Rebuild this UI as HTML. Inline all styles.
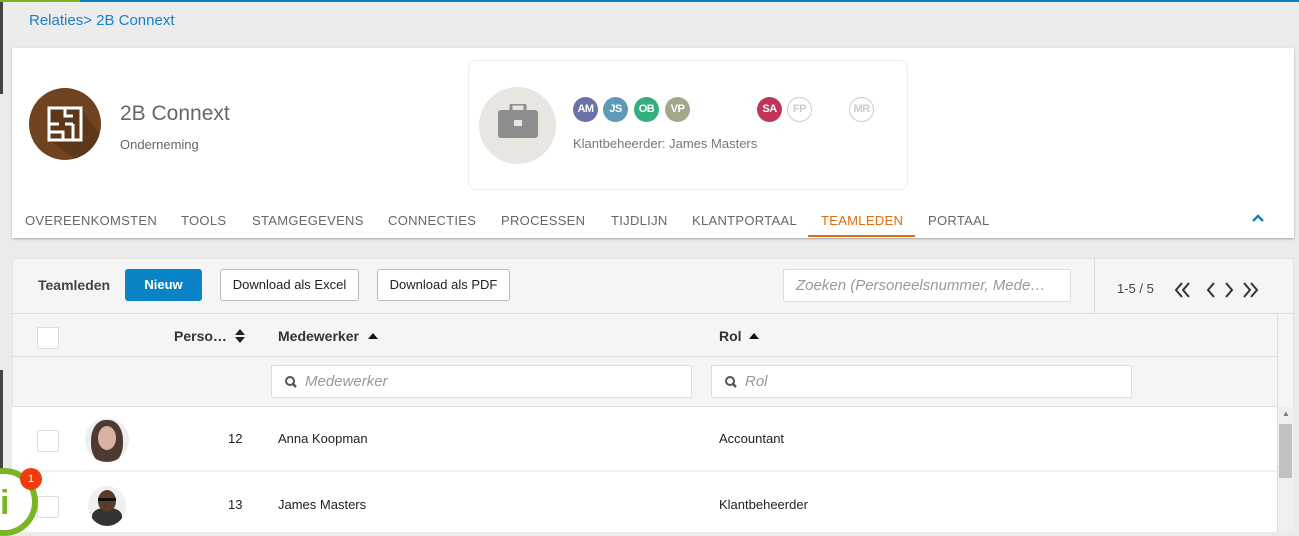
<!DOCTYPE html>
<html><head><meta charset="utf-8"><style>
*{box-sizing:border-box;margin:0;padding:0}
body{width:1299px;height:532px;overflow:hidden;background:#ebebeb;font-family:"Liberation Sans",Arial,sans-serif;position:relative;color:#333}
.abs{position:absolute}
.tab{position:absolute;top:213px;font-size:13px;color:#666;letter-spacing:0.3px}
.av{position:absolute;top:97px;width:25px;height:25px;border-radius:50%;color:#fff;font-size:11px;font-weight:bold;text-align:center;line-height:25px;letter-spacing:-0.5px}
.btn{position:absolute;top:269px;height:32px;border:1px solid #bbb;border-radius:3px;background:#fff;font-size:13px;line-height:30px;text-align:center;color:#222}
.cb{position:absolute;width:22px;height:22px;border:1px solid #ddd;border-radius:2px;background:#fff}
.inp{position:absolute;top:365px;height:33px;border:1px solid #ddd;border-radius:2px;background:#fff;font-size:15px;font-style:italic;color:#999;line-height:31px;padding-left:33px}
.th{position:absolute;top:328px;font-size:14px;font-weight:bold;color:#333}
.td{position:absolute;font-size:13px;color:#222}
</style></head><body>
<div class="abs" style="left:0;top:0;width:80px;height:2px;background:#7ab526"></div>
<div class="abs" style="left:80px;top:0;width:1219px;height:2px;background:#0a7fc5"></div>
<div class="abs" style="left:3px;top:2px;width:1296px;height:38px;background:#ececec"></div>
<div class="abs" style="left:0;top:2px;width:3px;height:92px;background:#444"></div>
<div class="abs" style="left:0;top:370px;width:3px;height:162px;background:#444"></div>
<div class="abs" style="left:29px;top:12px;font-size:15px;color:#1a7fc4">Relaties&gt; 2B Connext</div>

<div class="abs" style="left:12px;top:48px;width:1282px;height:190px;background:#fff;box-shadow:0 1px 2px rgba(0,0,0,.3)"></div>
<div class="abs" style="left:29px;top:88px;width:72px;height:72px;border-radius:50%;background:#6f4320;overflow:hidden">
<svg width="72" height="72"><polygon points="20,20 52,20 80,60 60,80 20,52" fill="#5e3719"/><rect x="20" y="20" width="32" height="32" fill="none" stroke="#fff" stroke-width="3"/><path d="M20 36h10M36 20v8h8M44 36v16M20 44h14v8M36 36h8" stroke="#fff" stroke-width="3" fill="none"/></svg></div>
<div class="abs" style="left:120px;top:102px;font-size:21px;color:#666">2B Connext</div>
<div class="abs" style="left:120px;top:137px;font-size:13px;color:#666">Onderneming</div>

<div class="abs" style="left:468px;top:60px;width:440px;height:130px;border:1px solid #eee;border-radius:8px;background:#fff"></div>
<div class="abs" style="left:479px;top:87px;width:77px;height:77px;border-radius:50%;background:#e9e6e2"></div>
<svg class="abs" style="left:497px;top:104px" width="42" height="36"><rect x="14" y="0" width="14" height="9" rx="2" fill="none" stroke="#8d8d8d" stroke-width="3"/><rect x="1" y="6" width="40" height="28" rx="3" fill="#8d8d8d"/><rect x="17" y="16" width="8" height="6" fill="#e9e6e2"/></svg>
<div class="av" style="left:573px;background:#6b72a8">AM</div>
<div class="av" style="left:603px;background:#5e9ab5">JS</div>
<div class="av" style="left:634px;background:#35ad7c">OB</div>
<div class="av" style="left:665px;background:#a3a88a">VP</div>
<div class="av" style="left:757px;background:#c0345a">SA</div>
<div class="av" style="left:787px;border:1px solid #ccc;color:#ccc;line-height:23px">FP</div>
<div class="av" style="left:849px;border:1px solid #ccc;color:#ccc;line-height:23px">MR</div>
<div class="abs" style="left:573px;top:136px;font-size:13px;color:#777">Klantbeheerder: James Masters</div>

<div class="tab" style="left:25px">OVEREENKOMSTEN</div>
<div class="tab" style="left:181px">TOOLS</div>
<div class="tab" style="left:252px">STAMGEGEVENS</div>
<div class="tab" style="left:388px">CONNECTIES</div>
<div class="tab" style="left:501px">PROCESSEN</div>
<div class="tab" style="left:611px">TIJDLIJN</div>
<div class="tab" style="left:692px">KLANTPORTAAL</div>
<div class="tab" style="left:821px;color:#e06a10">TEAMLEDEN</div>
<div class="abs" style="left:808px;top:235px;width:107px;height:2px;background:#e06a10"></div>
<div class="tab" style="left:928px">PORTAAL</div>
<svg class="abs" style="left:1251px;top:213px" width="14" height="10"><path d="M2 8L7 3L12 8" stroke="#1a7fc4" stroke-width="2.5" fill="none"/></svg>

<div class="abs" style="left:12px;top:258px;width:1282px;height:274px;background:#f5f5f5;border:1px solid #e3e3e3"></div>
<div class="abs" style="left:1094px;top:258px;width:1px;height:56px;background:#ddd"></div>
<div class="abs" style="left:12px;top:313px;width:1282px;height:1px;background:#ddd"></div>
<div class="abs" style="left:38px;top:277px;font-size:14px;font-weight:bold;color:#444">Teamleden</div>
<div class="btn" style="left:125px;width:77px;background:#0a82c6;border-color:#0a82c6;color:#fff;font-weight:bold">Nieuw</div>
<div class="btn" style="left:220px;width:139px">Download als Excel</div>
<div class="btn" style="left:377px;width:133px">Download als PDF</div>
<div class="abs" style="left:783px;top:269px;width:288px;height:33px;border:1px solid #ddd;border-radius:2px;background:#fff;font-size:15px;font-style:italic;color:#999;line-height:31px;padding-left:12px;white-space:nowrap;overflow:hidden">Zoeken (Personeelsnummer, Mede…</div>
<div class="abs" style="left:1117px;top:281px;font-size:13px;color:#444">1-5 / 5</div>
<svg class="abs" style="left:1174px;top:281px" width="86" height="18" fill="none" stroke="#333" stroke-width="2"><path d="M8 2L2 9L8 16M15 2L9 9L15 16"/><path d="M40 2L34 9L40 16"/><path d="M52 2L58 9L52 16"/><path d="M70 2L76 9L70 16M77 2L83 9L77 16"/></svg>

<div class="abs" style="left:1277px;top:314px;width:1px;height:218px;background:#ddd"></div>
<div class="cb" style="left:37px;top:327px"></div>
<div class="th" style="left:174px">Perso…</div>
<svg class="abs" style="left:235px;top:328px" width="10" height="16"><path d="M0 7L5 1L10 7Z M0 9L5 15L10 9Z" fill="#222"/></svg>
<div class="th" style="left:278px">Medewerker</div>
<svg class="abs" style="left:368px;top:332px" width="10" height="8"><path d="M0 7L5 1L10 7Z" fill="#111"/></svg>
<div class="th" style="left:719px">Rol</div>
<svg class="abs" style="left:749px;top:332px" width="10" height="8"><path d="M0 7L5 1L10 7Z" fill="#111"/></svg>
<div class="abs" style="left:12px;top:356px;width:1265px;height:1px;background:#ddd"></div>
<div class="inp" style="left:271px;width:421px">Medewerker</div>
<div class="inp" style="left:711px;width:421px">Rol</div>
<svg class="abs" style="left:284px;top:375px" width="14" height="14"><circle cx="6" cy="6" r="4" stroke="#555" stroke-width="2" fill="none"/><path d="M9 9l3 3" stroke="#555" stroke-width="2.5"/></svg>
<svg class="abs" style="left:724px;top:375px" width="14" height="14"><circle cx="6" cy="6" r="4" stroke="#555" stroke-width="2" fill="none"/><path d="M9 9l3 3" stroke="#555" stroke-width="2.5"/></svg>

<div class="abs" style="left:12px;top:406px;width:1265px;height:126px;background:#fff;border-top:1px solid #ddd"></div>
<div class="abs" style="left:12px;top:470px;width:1265px;height:2px;background:#f0f0f0"></div>
<div class="abs" style="left:1278px;top:407px;width:16px;height:125px;background:#efefef"></div>
<div class="abs" style="left:1279px;top:424px;width:13px;height:54px;background:#c1c1c1"></div>
<div class="abs" style="left:1282px;top:409px;font-size:8px;color:#777">▲</div>
<div class="cb" style="left:37px;top:430px"></div>
<div class="cb" style="left:37px;top:496px"></div>
<div class="abs" style="left:85px;top:418px;width:44px;height:44px;border-radius:50%;background:#eee;overflow:hidden"><div style="position:absolute;left:6px;top:2px;width:32px;height:44px;border-radius:45%;background:#4e3a30"></div><div style="position:absolute;left:13px;top:8px;width:18px;height:24px;border-radius:50%;background:#d8b2a2"></div></div>
<div class="abs" style="left:88px;top:486px;width:38px;height:40px;border-radius:50%;background:#f0f0f0;overflow:hidden"><div style="position:absolute;left:4px;top:22px;width:30px;height:20px;border-radius:40%;background:#333"></div><div style="position:absolute;left:10px;top:4px;width:18px;height:22px;border-radius:50%;background:#5a3a28"></div><div style="position:absolute;left:10px;top:12px;width:18px;height:3px;background:#111"></div></div>
<div class="td" style="left:228px;top:431px">12</div>
<div class="td" style="left:278px;top:431px">Anna Koopman</div>
<div class="td" style="left:719px;top:431px">Accountant</div>
<div class="td" style="left:228px;top:497px">13</div>
<div class="td" style="left:278px;top:497px">James Masters</div>
<div class="td" style="left:719px;top:497px">Klantbeheerder</div>

<div class="abs" style="left:-30px;top:468px;width:68px;height:68px;border-radius:50%;background:#fff;border:6px solid #7ab526"></div>
<div class="abs" style="left:0;top:484px;font-size:34px;color:#7ab526;font-weight:bold">i</div>
<div class="abs" style="left:20px;top:468px;width:22px;height:22px;border-radius:50%;background:#f03c0c;color:#fff;font-size:11px;text-align:center;line-height:22px">1</div>
</body></html>
